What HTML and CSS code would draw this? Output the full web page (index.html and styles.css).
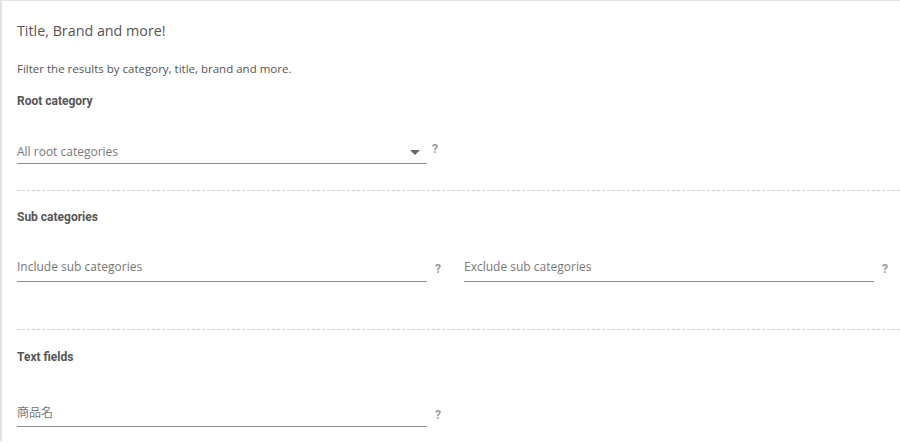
FILE: index.html
```html
<!DOCTYPE html>
<html lang="en">
<head>
    <meta charset="UTF-8">
    <meta name="viewport" content="width=device-width, initial-scale=1.0">
    <title>Filter</title>
    <link rel="stylesheet" href="styles.css">
</head>
<body>
    <div class="card">
        <h2 class="card-title">Title, Brand and more!</h2>
        <p class="card-desc">Filter the results by category, title, brand and more.</p>

        <div class="section section-root">
            <h3 class="section-title">Root category</h3>
            <div class="row row-root">
                <div class="col">
                    <div class="field select">
                        <span class="placeholder">All root categories</span>
                        <span class="arrow"></span>
                    </div>
                    <span class="help help-select">?</span>
                </div>
            </div>
        </div>

        <div class="section section-sub">
            <h3 class="section-title">Sub categories</h3>
            <div class="row row-sub">
                <div class="col">
                    <div class="field input">
                        <span class="placeholder">Include sub categories</span>
                    </div>
                    <span class="help">?</span>
                </div>
                <div class="col">
                    <div class="field input">
                        <span class="placeholder">Exclude sub categories</span>
                    </div>
                    <span class="help">?</span>
                </div>
            </div>
        </div>

        <div class="section section-text">
            <h3 class="section-title">Text fields</h3>
            <div class="row row-text">
                <div class="col">
                    <div class="field input">
                        <span class="placeholder">商品名</span>
                    </div>
                    <span class="help">?</span>
                </div>
            </div>
        </div>
    </div>
</body>
</html>
```

FILE: styles.css
```css
html, body {
    margin: 0;
    padding: 0;
    background: #fff;
}

body {
    font-family: "Open Sans", "Noto Sans CJK JP", sans-serif;
    color: #555;
    overflow: hidden;
}

.card {
    border-top: 1px solid #e3e3e3;
    border-left: 2px solid #e3e3e3;
    padding: 20px 0 14px 15px;
}

.card-title {
    margin: 0;
    font-size: 14.3px;
    font-weight: 400;
    line-height: 20px;
    color: #555;
}

.card-desc {
    margin: 20px 0 0;
    font-size: 11.5px;
    line-height: 16px;
}

.section {
    border-top: 1px dashed #cfcfcf;
}

.section-root {
    border-top: none;
    padding: 16px 0 26px;
}

.section-sub {
    padding: 18px 0 47px;
}

.section-text {
    padding: 19px 0 0;
}

.section-title {
    margin: 0;
    font-family: Roboto, "Noto Sans", sans-serif;
    font-size: 12px;
    font-weight: 700;
    line-height: 16px;
    color: #555;
}

.row {
    display: flex;
}

.row-root { margin-top: 35px; }
.row-sub { margin-top: 34px; }
.row-text { margin-top: 40px; }

.col {
    display: flex;
    flex-shrink: 0;
    width: 447px;
}

.field {
    width: 410px;
    display: flex;
    align-items: center;
    border-bottom: 1px solid #8e8e8e;
    line-height: 16px;
}

.select { padding-bottom: 3px; }
.row-sub .field { padding-bottom: 6px; }
.row-text .field { padding-bottom: 5px; }

.placeholder {
    flex: 1;
    font-size: 12px;
    color: #777;
}

.arrow {
    width: 0;
    height: 0;
    border-left: 5px solid transparent;
    border-right: 5px solid transparent;
    border-top: 5px solid #666;
    margin-right: 7px;
}

.help {
    font-family: Roboto, sans-serif;
    font-size: 12px;
    font-weight: 700;
    color: #999;
    line-height: 16px;
    margin-left: 8px;
    margin-top: 2px;
}

.help-select {
    margin-left: 5px;
    margin-top: -3px;
}
```
